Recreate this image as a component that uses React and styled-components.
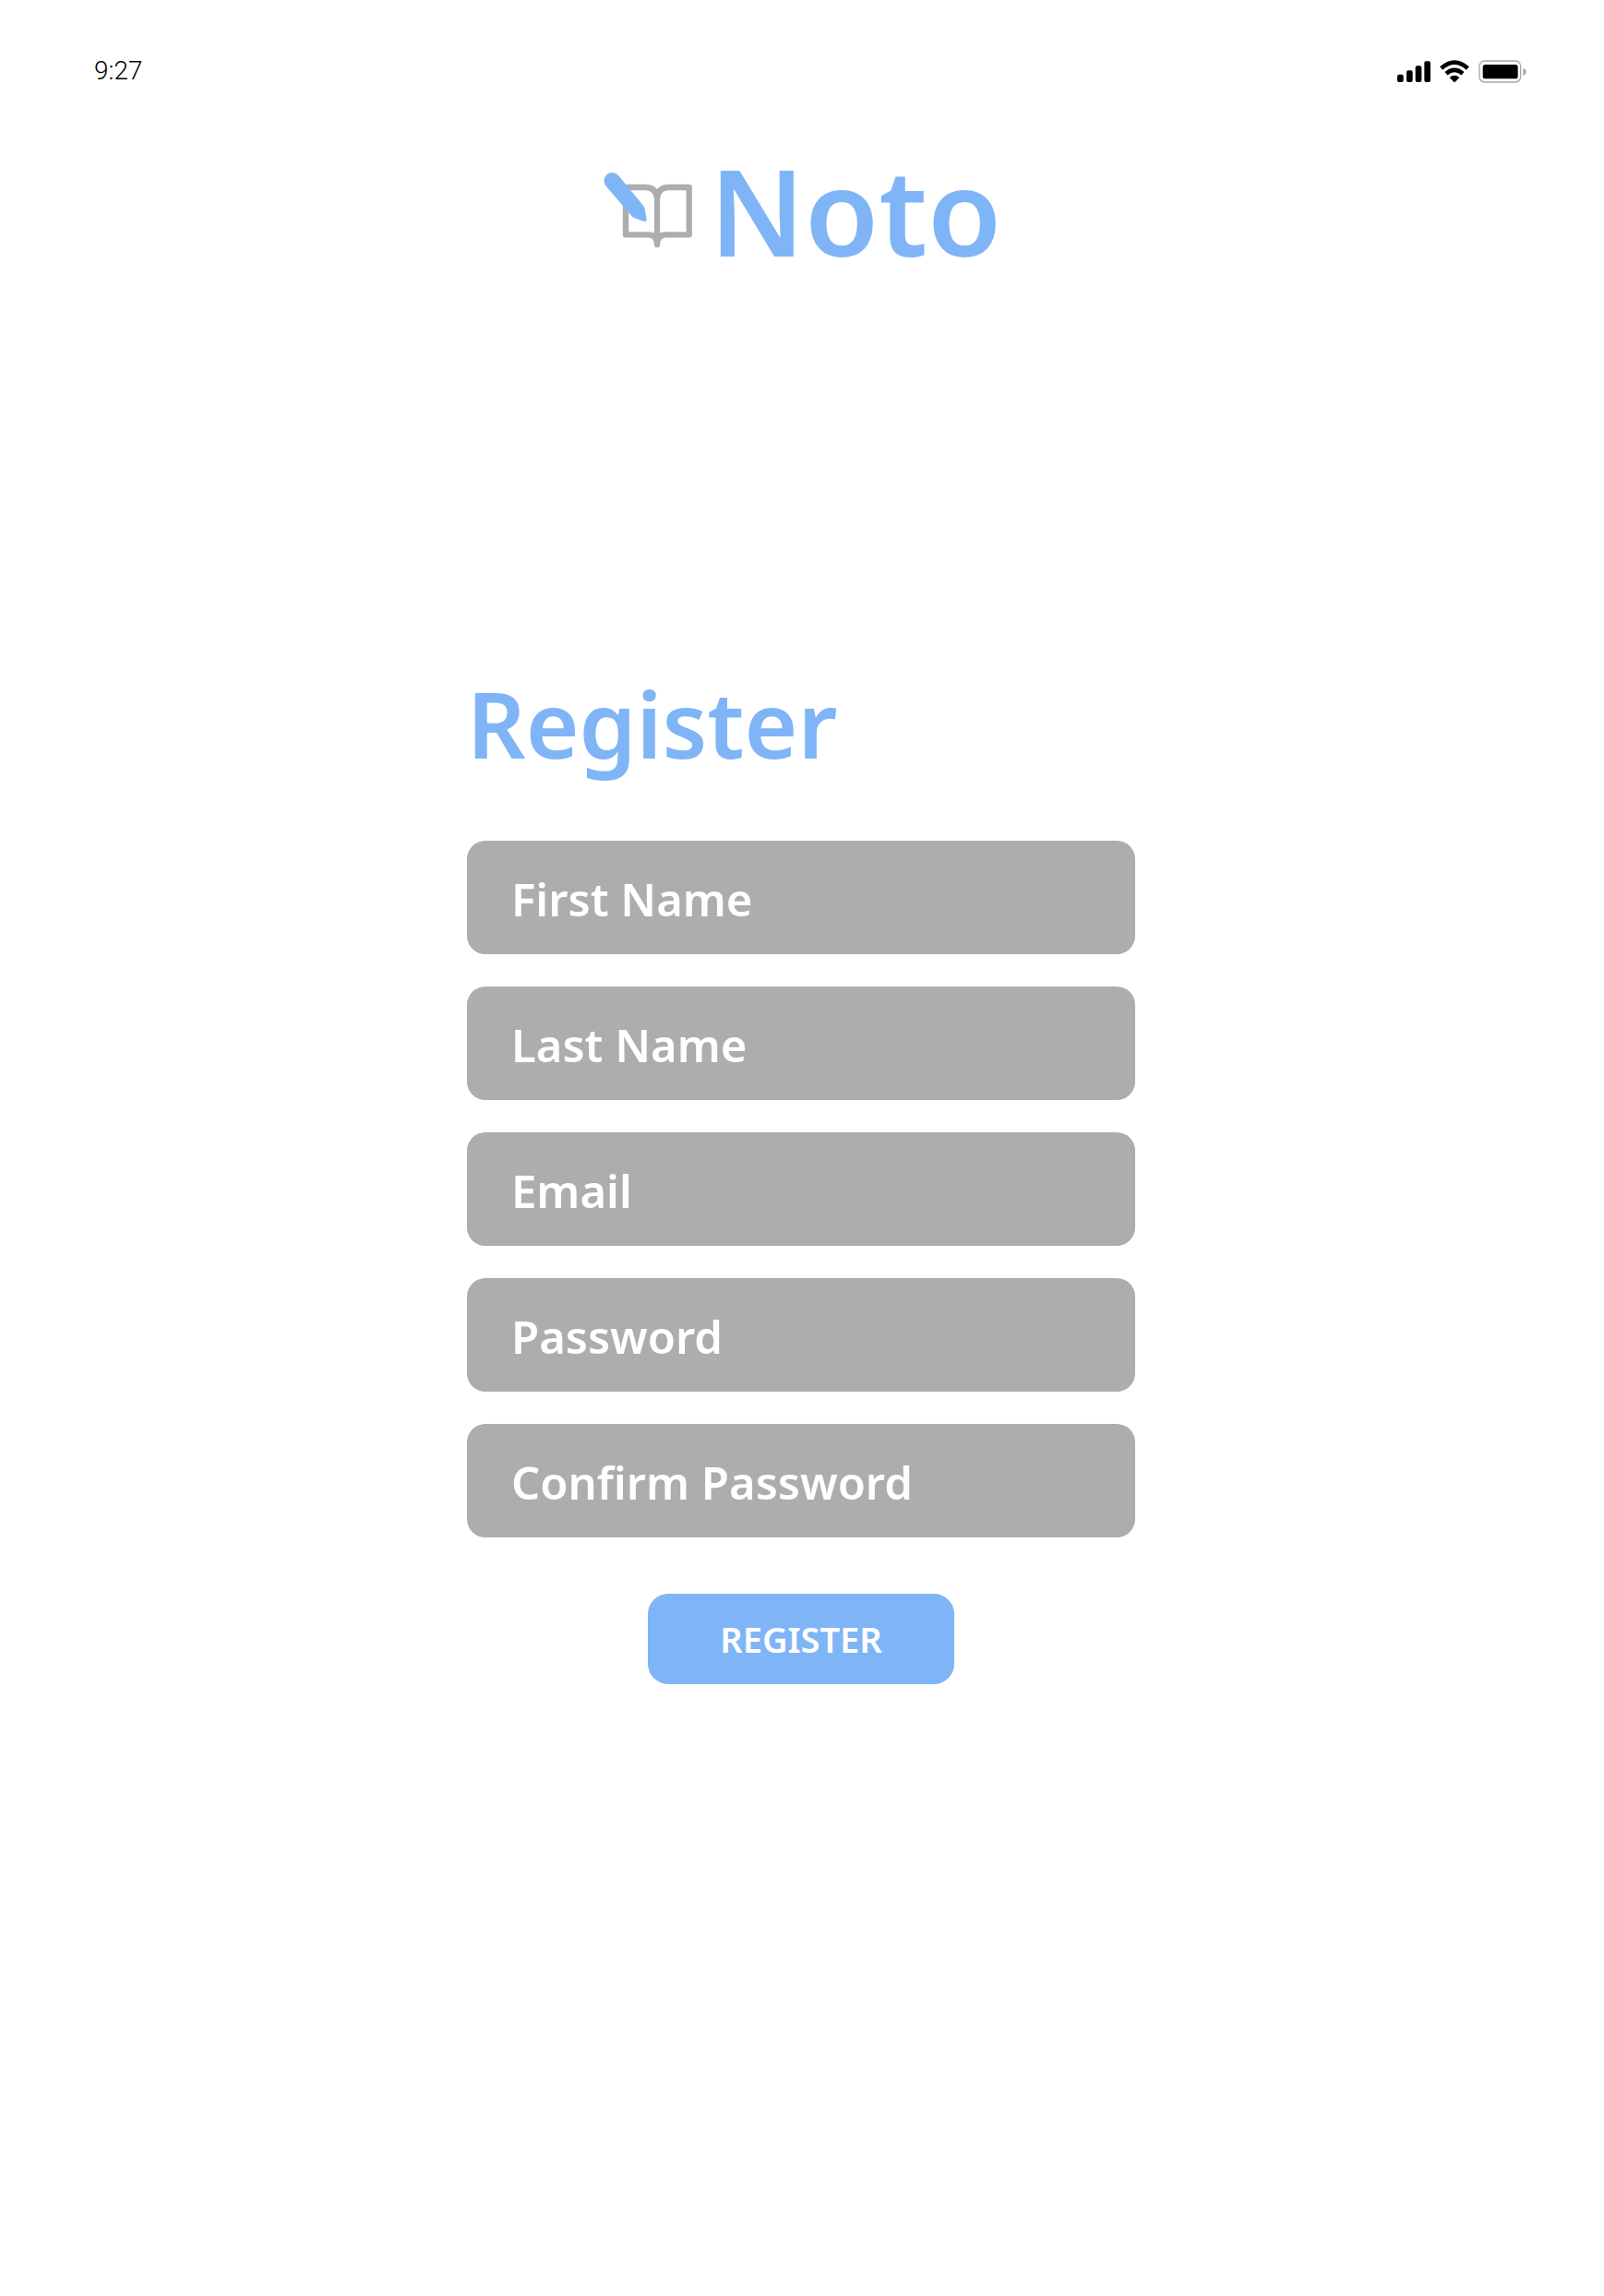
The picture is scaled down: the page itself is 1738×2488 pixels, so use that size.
import React from "react";
import styled, { createGlobalStyle } from "styled-components";

const blue = "#7fb5f6";
const gray = "#adadad";

const GlobalStyle = createGlobalStyle`
  *, *::before, *::after { box-sizing: border-box; }
  body {
    margin: 0;
    background: #ffffff;
    font-family: "Noto Sans", sans-serif;
  }
`;

const Page = styled.div`
  display: flex;
  flex-direction: column;
  min-height: 100vh;
  padding-bottom: 64px;
`;

const StatusBar = styled.div`
  display: flex;
  align-items: center;
  justify-content: space-between;
  padding: 60px 84px 0 102px;
`;

const Time = styled.time`
  font-family: Roboto, sans-serif;
  font-weight: 300;
  font-size: 28px;
  line-height: 34px;
  color: #000000;
`;

const StatusIcons = styled.div`
  display: flex;
  align-items: center;
  gap: 10px;
`;

const Brand = styled.header`
  display: flex;
  align-items: center;
  justify-content: center;
  gap: 18px;
  margin-top: 68px;
`;

const BrandName = styled.span`
  font-weight: 600;
  font-size: 130px;
  line-height: 132px;
  color: ${blue};
`;

const Main = styled.main`
  display: flex;
  justify-content: center;
  margin-top: 440px;
  padding-right: 2px;
`;

const Form = styled.form`
  display: flex;
  flex-direction: column;
  width: 724px;
  max-width: 100%;
`;

const Title = styled.h1`
  margin: 0 0 77px;
  font-weight: 600;
  font-size: 99px;
  line-height: 100px;
  color: ${blue};
`;

const Fields = styled.div`
  display: flex;
  flex-direction: column;
  gap: 35px;
`;

const Field = styled.div`
  display: grid;
  grid-template-areas: "field";
  align-items: center;
`;

const Input = styled.input`
  grid-area: field;
  width: 100%;
  height: 123px;
  padding: 0 48px;
  border: 0;
  border-radius: 20px;
  background: ${gray};
  color: #ffffff;
  font-family: inherit;
  font-weight: 600;
  font-size: 49px;
`;

const Label = styled.label`
  grid-area: field;
  padding: 2px 48px 0;
  color: #ffffff;
  font-weight: 600;
  font-size: 49px;
  line-height: 68px;
  pointer-events: none;

  ${Input}:not(:placeholder-shown) + & {
    visibility: hidden;
  }
`;

const SubmitButton = styled.button`
  align-self: center;
  width: 332px;
  height: 98px;
  margin-top: 61px;
  padding: 0;
  border: 0;
  border-radius: 22px;
  background: ${blue};
  color: #ffffff;
  font-family: inherit;
  font-weight: 600;
  font-size: 38px;
  cursor: pointer;
`;

function SignalIcon() {
  return (
    <svg width="36" height="25" viewBox="48 43 108 75" aria-hidden="true">
      <rect x="48" y="90" width="20" height="25" rx="6" />
      <rect x="78" y="77" width="20" height="38" rx="6" />
      <rect x="107" y="62" width="20" height="53" rx="6" />
      <rect x="136" y="47" width="20" height="68" rx="6" />
    </svg>
  );
}

function WifiIcon() {
  return (
    <svg width="32" height="25" viewBox="187 43 96 75" aria-hidden="true">
      <g fill="none" stroke="#000000" strokeWidth="14">
        <path d="M192 70 Q235 32 278 70" />
        <path d="M208 87 Q235 64 262 87" />
      </g>
      <path d="M219 100 Q235 86 251 100 L239 113 Q235 117 231 113 Z" />
    </svg>
  );
}

function BatteryIcon() {
  return (
    <svg width="52" height="25" viewBox="312 43 156 75" aria-hidden="true">
      <rect x="315" y="46" width="134" height="69" rx="17" fill="none" stroke="#a6a6a6" strokeWidth="4" />
      <rect x="326" y="58" width="114" height="46" rx="8" />
      <path d="M457 69 Q467 72 467 81 Q467 90 457 93 Z" fill="#a6a6a6" />
    </svg>
  );
}

function NotebookLogo() {
  return (
    <svg width="98" height="84" viewBox="36 51 294 252" aria-hidden="true">
      <path
        d="M111 102 H174 Q213 102 213 144 Q213 102 252 102 H317 V256 H242 Q213 256 213 288 Q213 256 184 256 H111 Z M213 140 V288"
        fill="none"
        stroke={gray}
        strokeWidth="19"
        strokeLinejoin="round"
        strokeLinecap="round"
      />
      <path
        d="M47 98 A26 26 0 0 1 87 63 L168 161 Q171 164 172 168 L179 206 Q179 214 171 213 L138 201 Q133 199 130 195 Z"
        fill={blue}
      />
    </svg>
  );
}

const fields = [
  { id: "first-name", label: "First Name", type: "text", autoComplete: "given-name" },
  { id: "last-name", label: "Last Name", type: "text", autoComplete: "family-name" },
  { id: "email", label: "Email", type: "email", autoComplete: "email" },
  { id: "password", label: "Password", type: "password", autoComplete: "new-password" },
  { id: "confirm-password", label: "Confirm Password", type: "password", autoComplete: "new-password" },
];

export default function App() {
  return (
    <>
      <GlobalStyle />
      <Page>
        <StatusBar>
          <Time>9:27</Time>
          <StatusIcons>
            <SignalIcon />
            <WifiIcon />
            <BatteryIcon />
          </StatusIcons>
        </StatusBar>
        <Brand>
          <NotebookLogo />
          <BrandName>Noto</BrandName>
        </Brand>
        <Main>
          <Form onSubmit={(event) => event.preventDefault()}>
            <Title>Register</Title>
            <Fields>
              {fields.map(({ id, label, type, autoComplete }) => (
                <Field key={id}>
                  <Input id={id} name={id} type={type} placeholder=" " autoComplete={autoComplete} />
                  <Label htmlFor={id}>{label}</Label>
                </Field>
              ))}
            </Fields>
            <SubmitButton type="submit">REGISTER</SubmitButton>
          </Form>
        </Main>
      </Page>
    </>
  );
}
